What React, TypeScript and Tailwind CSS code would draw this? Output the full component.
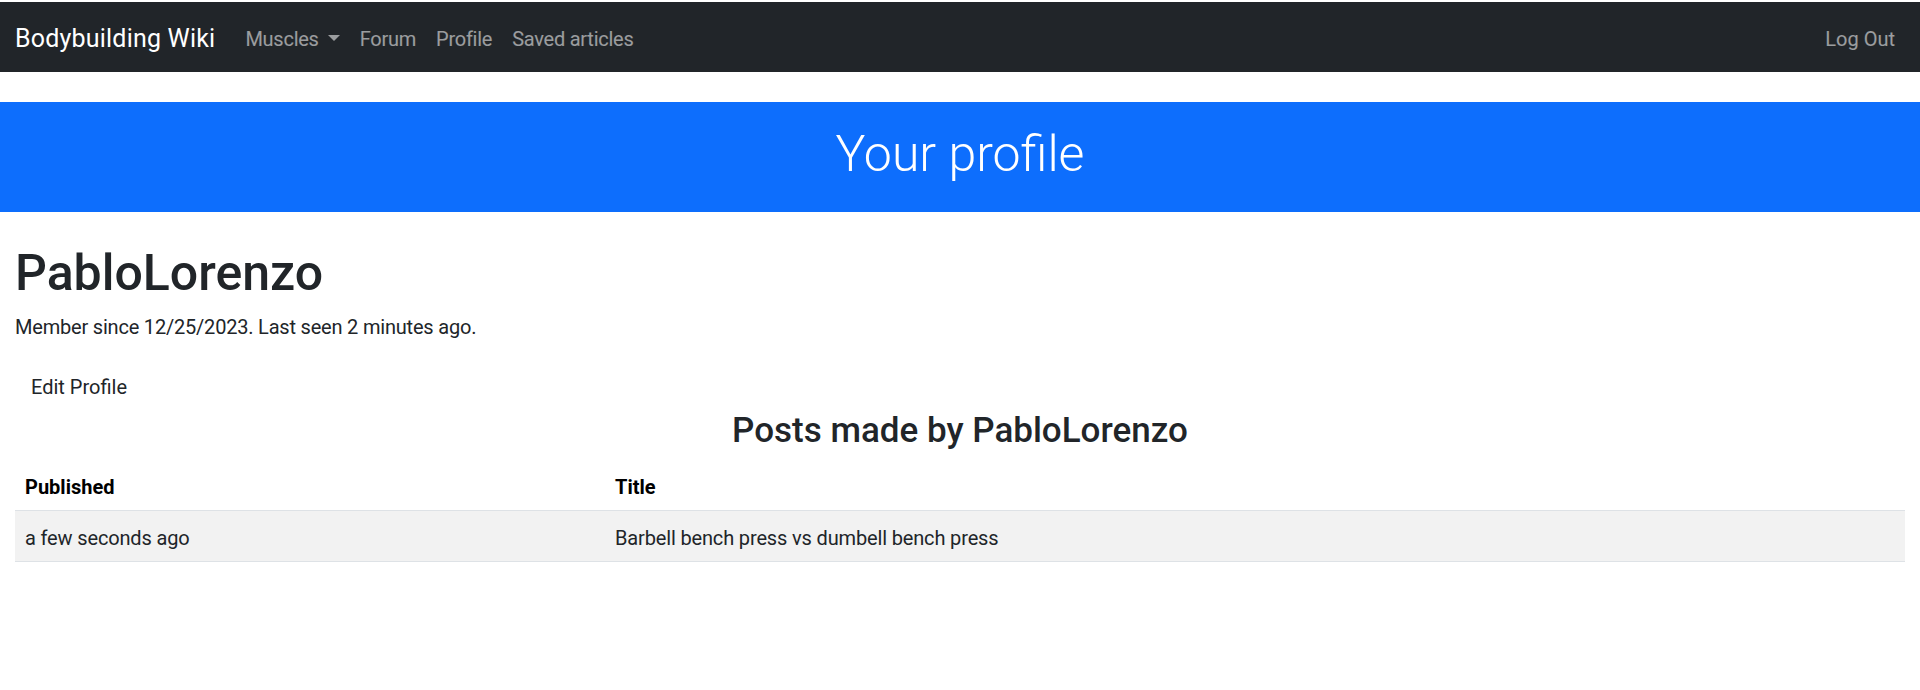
import React from "react";

export default function App() {
  return (
    <div className="min-h-[690px] bg-white pt-[2px] font-['Roboto','Liberation_Sans',sans-serif] text-[20px] leading-[30px] text-[#212529]">
      <nav className="flex h-[70px] items-center bg-[#212529] px-[15px]">
        <a className="mr-[20px] pt-[8px] pb-[4.5px] text-[25px] leading-[37.5px] tracking-[0.2px] text-white">
          Bodybuilding Wiki
        </a>
        <ul className="flex items-center tracking-[-0.25px]">
          <li>
            <a className="flex items-center px-[10px] pt-[11.5px] pb-[8.5px] text-white/55">
              Muscles
              <span className="ml-[9px] mb-[2px] h-0 w-0 border-x-[6px] border-t-[6px] border-x-transparent border-t-white/55" />
            </a>
          </li>
          <li>
            <a className="block px-[10px] pt-[11.5px] pb-[8.5px] text-white/55">Forum</a>
          </li>
          <li>
            <a className="block px-[10px] pt-[11.5px] pb-[8.5px] text-white/55">Profile</a>
          </li>
          <li>
            <a className="block px-[10px] pt-[11.5px] pb-[8.5px] text-white/55">Saved articles</a>
          </li>
        </ul>
        <a className="ml-auto block px-[10px] pt-[11.5px] pb-[8.5px] text-white/55">Log Out</a>
      </nav>

      <div className="mt-[30px] bg-[#0d6efd] p-[20px] text-center text-white">
        <h1 className="mb-[10px] pt-[5px] text-[50px] font-light leading-[55px]">Your profile</h1>
      </div>

      <div className="mt-[29px] px-[15px]">
        <h1 className="mb-[10px] pt-[4px] text-[50px] font-medium leading-[56px]">PabloLorenzo</h1>
        <p className="mb-[20px] pt-[2px] leading-[28px] tracking-[-0.2px]">
          Member since 12/25/2023. Last seen 2 minutes ago.
        </p>
        <button className="border-[1.25px] border-transparent px-[15px] pt-[9.5px] pb-[5.5px] leading-[30px] text-[#212529]">
          Edit Profile
        </button>
        <h3 className="mb-[10px] pt-[3px] text-center text-[35px] font-medium leading-[39px]">
          Posts made by PabloLorenzo
        </h3>
        <table className="w-full border-collapse text-left">
          <thead>
            <tr className="border-b border-[#dee2e6]">
              <th className="w-[590px] px-[10px] pt-[12px] pb-[8px] font-bold text-black">Published</th>
              <th className="px-[10px] pt-[12px] pb-[8px] font-bold text-black">Title</th>
            </tr>
          </thead>
          <tbody>
            <tr className="border-b border-[#dee2e6] bg-[#f2f2f2] tracking-[-0.15px]">
              <td className="px-[10px] pt-[12px] pb-[8px]">a few seconds ago</td>
              <td className="px-[10px] pt-[12px] pb-[8px]">Barbell bench press vs dumbell bench press</td>
            </tr>
          </tbody>
        </table>
      </div>
    </div>
  );
}
